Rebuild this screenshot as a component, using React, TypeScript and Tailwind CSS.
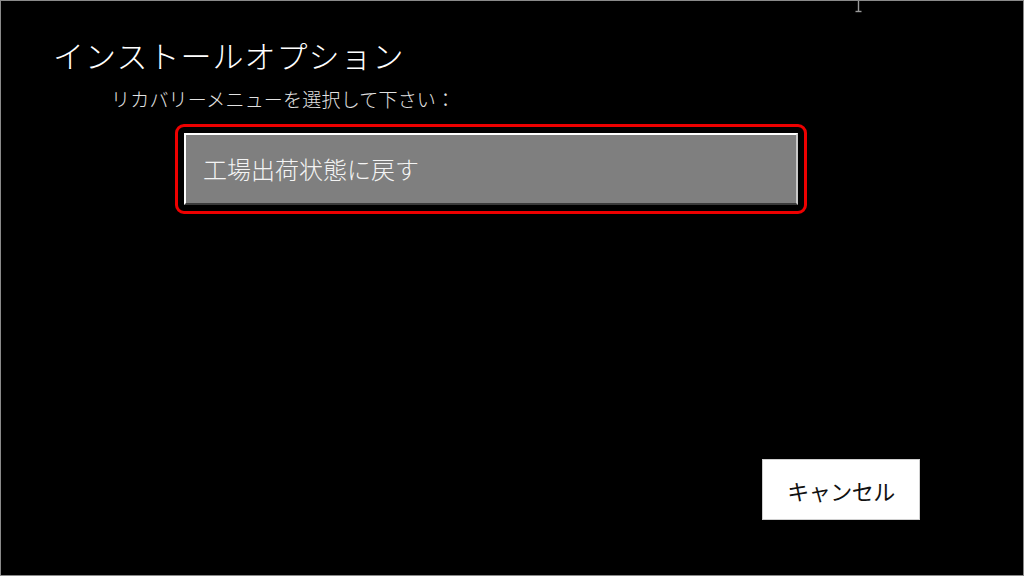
const font = "font-['Noto_Sans_CJK_JP','Noto_Sans',sans-serif]";

function IBeam() {
  return (
    <svg
      className="absolute left-[853px] top-0"
      width="9"
      height="12"
      viewBox="0 0 9 12"
    >
      <path d="M4.5 0 V10" stroke="#9a9a9a" strokeWidth="1.4" />
      <path d="M1.5 10.5 H7.5" stroke="#9a9a9a" strokeWidth="1.4" />
    </svg>
  );
}

export default function App() {
  return (
    <div
      className={`relative w-[1024px] h-[576px] bg-black border border-[#8a8a8a] flex flex-col overflow-hidden ${font}`}
    >
      <IBeam />
      <h1 className="ml-[52px] mt-[36px] text-[31px] leading-[36px] font-light text-white tracking-[1px]">
        インストールオプション
      </h1>
      <p className="ml-[110px] mt-[15px] text-[19px] leading-[22px] font-light text-[#e2e2e2] tracking-[0.2px]">
        リカバリーメニューを選択して下さい：
      </p>
      <div className="ml-[174px] mt-[14px] w-[632px] h-[90px] border-[3px] border-[#ee0000] rounded-[9px] p-[6px]">
        <button className="w-full h-full bg-[#7f7f7f] border-2 border-t-white border-l-white border-r-[#c8c8c8] border-b-[#3a3a3a] text-left pl-[17px] text-[24px] leading-none font-light text-[#f4f4f4]">
          工場出荷状態に戻す
        </button>
      </div>
      <div className="mt-auto mb-[55px] ml-[761px]">
        <button className="w-[158px] h-[61px] bg-white border border-[#d0d0d0] text-[22px] leading-none text-[#111] tracking-[-0.5px]">
          キャンセル
        </button>
      </div>
    </div>
  );
}
